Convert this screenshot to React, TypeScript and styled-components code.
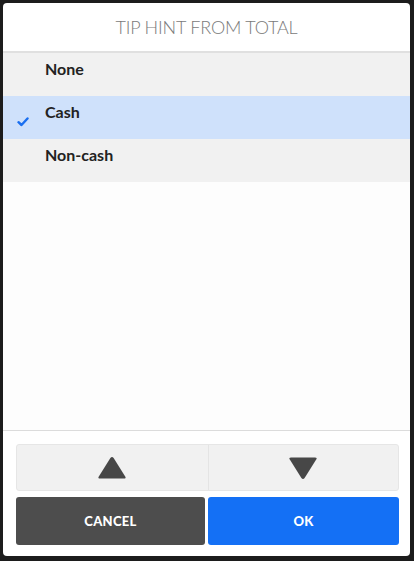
import React, { useState } from "react";
import styled, { createGlobalStyle } from "styled-components";

const Global = createGlobalStyle`
  html, body { margin: 0; padding: 0; }
  body {
    background: #1c1c1c;
    font-family: Lato, "Open Sans", sans-serif;
    height: 561px;
    overflow: hidden;
  }
`;

const Dialog = styled.div`
  margin: 3px;
  width: 407px;
  height: 553px;
  background: #ffffff;
  border-radius: 4px;
  display: flex;
  flex-direction: column;
  overflow: hidden;
`;

const Header = styled.div`
  height: 48px;
  border-bottom: 2px solid #e0e0e0;
  display: flex;
  align-items: center;
  justify-content: center;
  font-family: Lato, sans-serif;
  font-weight: 300;
  font-size: 18px;
  color: #7a7a7a;
  letter-spacing: -0.2px;
`;

const List = styled.div`
  flex: 1;
  display: flex;
  flex-direction: column;
  background: #fdfdfd;
`;

const Row = styled.div<{ $selected: boolean }>`
  height: 43px;
  display: flex;
  align-items: center;
  background: ${(p) => (p.$selected ? "#cfe1fb" : "#f1f1f1")};
  cursor: pointer;
`;

const CheckSlot = styled.div`
  width: 42px;
  display: flex;
  justify-content: flex-start;
  padding-left: 14px;
  box-sizing: border-box;
  margin-top: 8px;
`;

const Label = styled.span`
  font-weight: 700;
  font-size: 16px;
  color: #222;
  margin-top: -12px;
`;

const Footer = styled.div`
  border-top: 1px solid #dcdcdc;
  padding: 13px 11px 11px 13px;
  display: flex;
  flex-direction: column;
  gap: 6px;
`;

const ArrowBar = styled.div`
  height: 47px;
  display: grid;
  grid-template-columns: 1fr 1fr;
  background: #f1f1f1;
  border: 1px solid #e6e6e6;
  border-radius: 3px;
  box-sizing: border-box;
`;

const ArrowButton = styled.button<{ $divider?: boolean }>`
  border: none;
  background: transparent;
  display: flex;
  align-items: center;
  justify-content: center;
  padding: 0;
  border-left: ${(p) => (p.$divider ? "1px solid #e4e4e4" : "none")};
  cursor: pointer;
`;

const ButtonRow = styled.div`
  display: grid;
  grid-template-columns: 189fr 191fr;
  gap: 3px;
`;

const ActionButton = styled.button<{ $primary?: boolean }>`
  height: 48px;
  border: none;
  border-radius: 3px;
  background: ${(p) => (p.$primary ? "#1470f5" : "#4d4d4d")};
  color: #fff;
  font-family: Lato, sans-serif;
  font-weight: 900;
  font-size: 13px;
  letter-spacing: 0.3px;
  cursor: pointer;
`;

const Check = () => (
  <svg width="12" height="10" viewBox="0 0 12 10">
    <path d="M1.5 5.2 L4.5 8 L10.5 1.5" fill="none" stroke="#1a6ff0" strokeWidth="2.4" strokeLinecap="round" strokeLinejoin="round" />
  </svg>
);

const Triangle = ({ down }: { down?: boolean }) => (
  <svg width="30" height="24" viewBox="0 0 30 24">
    <path
      d={down ? "M3 1.5 H27 Q29.5 1.5 28.2 3.6 L16.6 22 Q15 24 13.4 22 L1.8 3.6 Q0.5 1.5 3 1.5 Z" : "M3 22.5 H27 Q29.5 22.5 28.2 20.4 L16.6 2 Q15 0 13.4 2 L1.8 20.4 Q0.5 22.5 3 22.5 Z"}
      fill="#474747"
    />
  </svg>
);

const options = ["None", "Cash", "Non-cash"];

export default function App() {
  const [selected, setSelected] = useState("Cash");
  return (
    <>
      <Global />
      <Dialog>
        <Header>TIP HINT FROM TOTAL</Header>
        <List>
          {options.map((o) => (
            <Row key={o} $selected={o === selected} onClick={() => setSelected(o)}>
              <CheckSlot>{o === selected ? <Check /> : null}</CheckSlot>
              <Label>{o}</Label>
            </Row>
          ))}
        </List>
        <Footer>
          <ArrowBar>
            <ArrowButton aria-label="Up">
              <Triangle />
            </ArrowButton>
            <ArrowButton $divider aria-label="Down">
              <Triangle down />
            </ArrowButton>
          </ArrowBar>
          <ButtonRow>
            <ActionButton>CANCEL</ActionButton>
            <ActionButton $primary>OK</ActionButton>
          </ButtonRow>
        </Footer>
      </Dialog>
    </>
  );
}
